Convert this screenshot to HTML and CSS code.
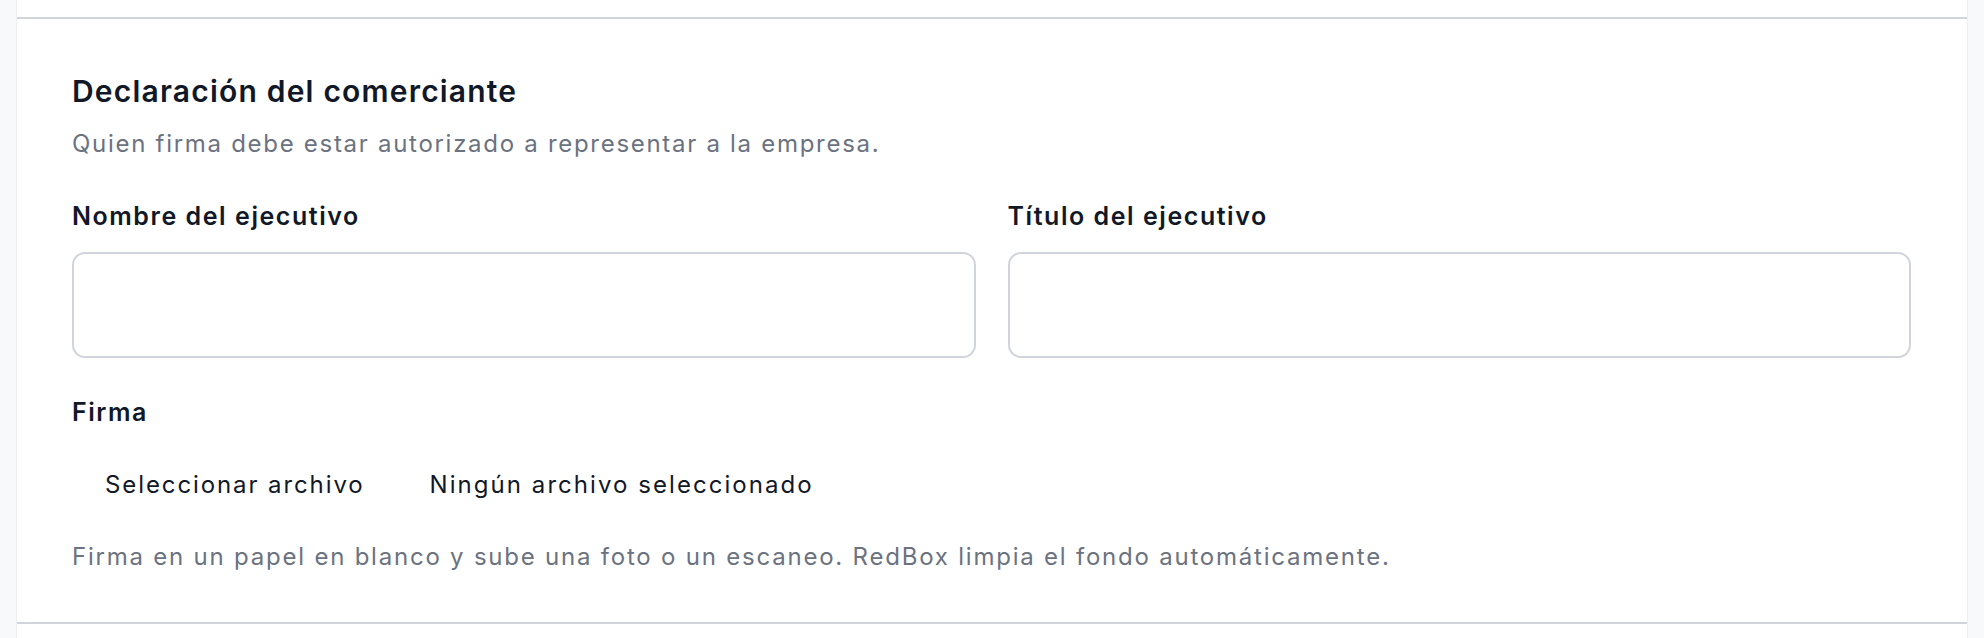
FILE: index.html
```html
<!DOCTYPE html>
<html lang="es">
<head>
<meta charset="utf-8">
<title>Declaración del comerciante</title>
<link rel="stylesheet" href="styles.css">
</head>
<body>
<div class="page">
  <div class="card">
    <div class="card-top"></div>
    <section class="section">
      <h2 class="section-title">Declaración del comerciante</h2>
      <p class="section-desc">Quien firma debe estar autorizado a representar a la empresa.</p>
      <div class="grid">
        <div class="field">
          <label class="label" for="exec-name">Nombre del ejecutivo</label>
          <input class="input" id="exec-name" type="text">
        </div>
        <div class="field">
          <label class="label" for="exec-title">Título del ejecutivo</label>
          <input class="input" id="exec-title" type="text">
        </div>
      </div>
      <div class="field sign">
        <span class="label">Firma</span>
        <div class="file-row">
          <span class="file-btn">Seleccionar archivo</span>
          <span class="file-name">Ningún archivo seleccionado</span>
        </div>
        <p class="help">Firma en un papel en blanco y sube una foto o un escaneo. RedBox limpia el fondo automáticamente.</p>
      </div>
    </section>
    <div class="card-bottom"></div>
  </div>
</div>
</body>
</html>
```

FILE: styles.css
```css
* { box-sizing: border-box; }
html, body { margin: 0; padding: 0; }
body {
  background: #f8f9fb;
  font-family: Inter, "Liberation Sans", sans-serif;
  color: #111827;
  height: 638px;
  overflow: hidden;
}
.page {
  padding: 0 16px;
}
.card {
  background: #ffffff;
  border-left: 1px solid #eceef2;
  border-right: 1px solid #eceef2;
  min-height: 638px;
}
.card-top { height: 17px; }
.section {
  border-top: 2px solid #d1d5db;
  border-bottom: 2px solid #d1d5db;
  padding: 54px 56px 49px 55px;
}
.section-title {
  margin: 0;
  font-size: 30px;
  line-height: 36px;
  font-weight: 600;
  letter-spacing: 1.2px;
  color: #111827;
}
.section-desc {
  margin: 19px 0 0;
  font-size: 24px;
  line-height: 32px;
  letter-spacing: 1.71px;
  color: #6b7280;
}
.grid {
  display: grid;
  grid-template-columns: 1fr 1fr;
  column-gap: 32px;
  margin-top: 40px;
}
.field { display: flex; flex-direction: column; }
.label {
  font-size: 25px;
  line-height: 32px;
  font-weight: 600;
  letter-spacing: 1.55px;
  color: #111827;
}
.input {
  margin-top: 20px;
  height: 106px;
  border: 2px solid #d1d5db;
  border-radius: 13px;
  background: #fff;
  font: inherit;
  padding: 0 18px;
}
.sign { margin-top: 38px; }
.file-row {
  display: flex;
  align-items: center;
  height: 48px;
  margin-top: 32px;
  font-size: 24px;
  letter-spacing: 1.9px;
}
.file-btn {
  padding: 0 33px;
  color: #111827;
}
.file-name {
  margin-left: 32px;
  letter-spacing: 2.05px;
  color: #111827;
}
.help {
  margin: 33px 0 0;
  font-size: 24px;
  line-height: 32px;
  letter-spacing: 1.78px;
  color: #6b7280;
}
```
